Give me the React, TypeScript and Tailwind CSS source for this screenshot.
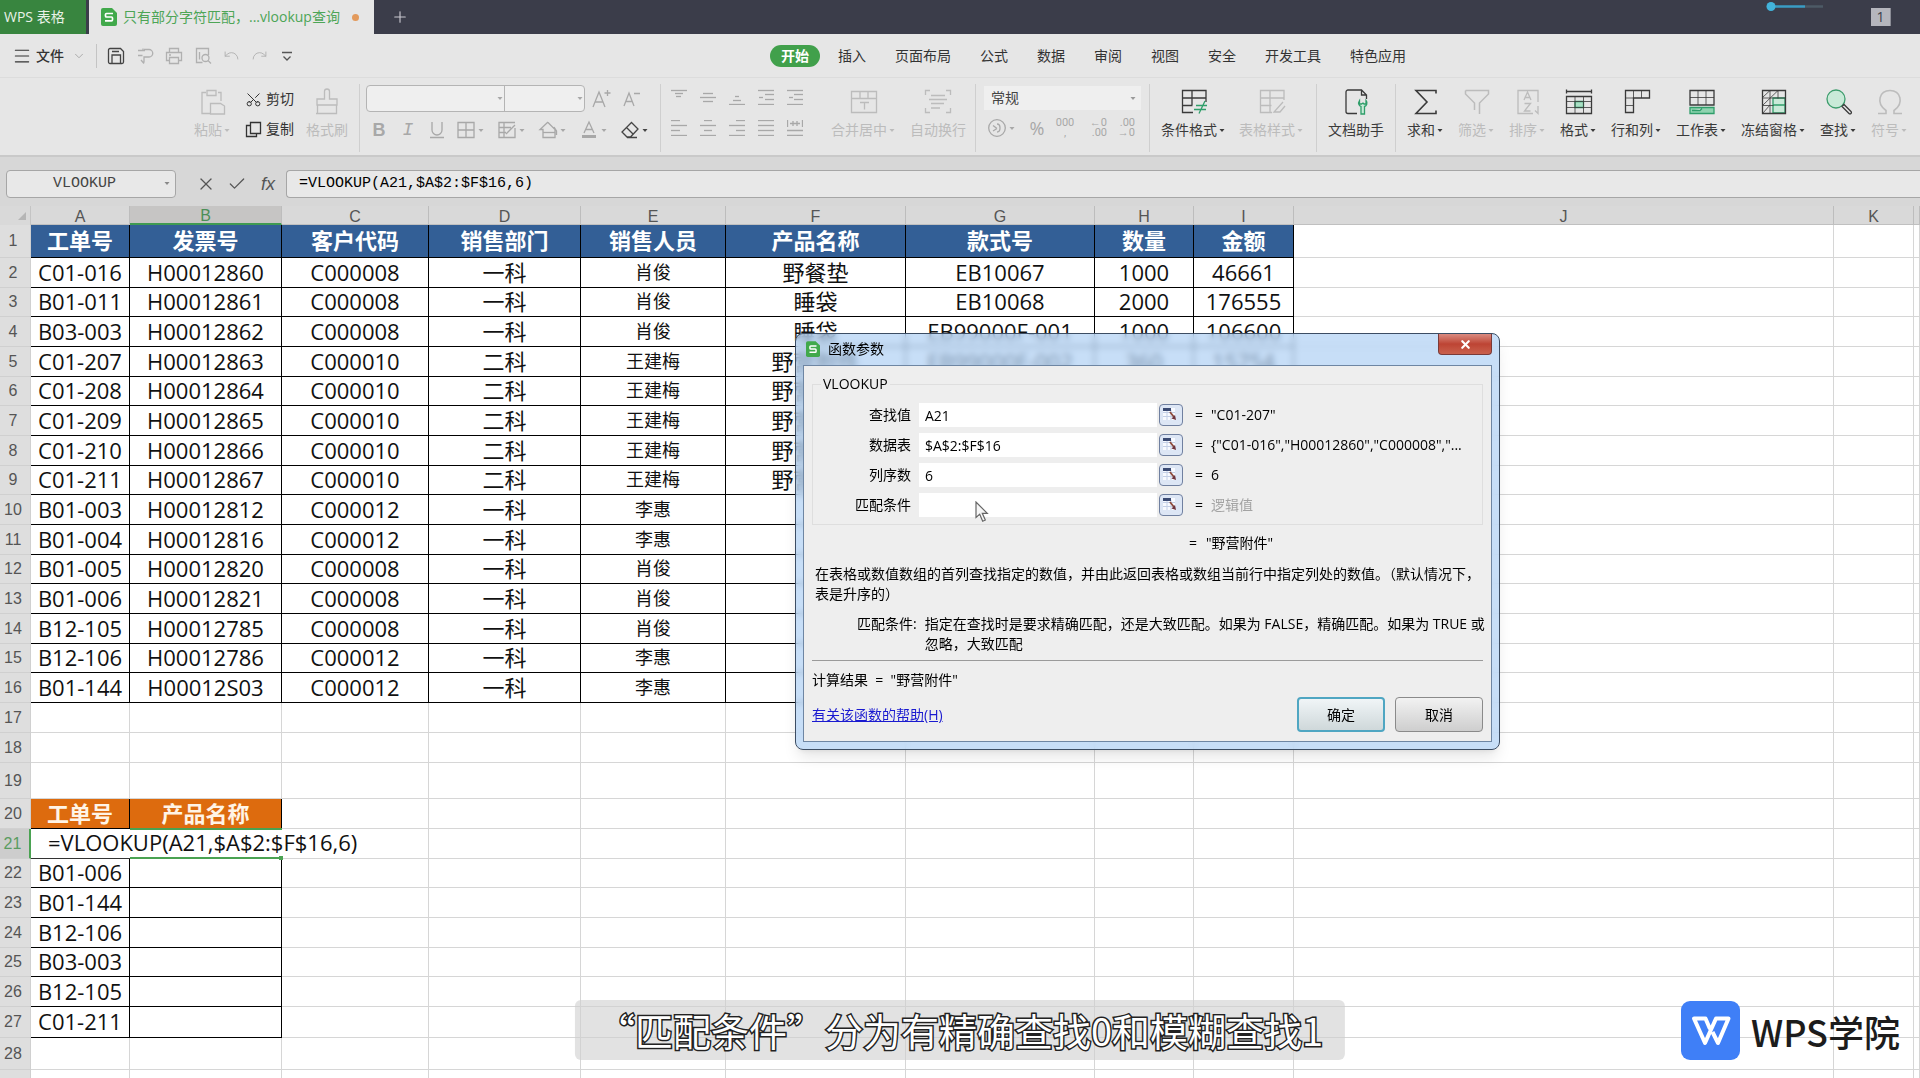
import type { ReactNode } from "react";
import { Menu, ChevronDown, Plus, X, Check, Undo, Redo, Scissors } from "lucide-react";

type Cell = string;

const columns = ["A", "B", "C", "D", "E", "F", "G", "H", "I", "J", "K", ""];

const headers = ["工单号", "发票号", "客户代码", "销售部门", "销售人员", "产品名称", "款式号", "数量", "金额"];

const orders: Cell[][] = [
  ["C01-016", "H00012860", "C000008", "一科", "肖俊", "野餐垫", "EB10067", "1000", "46661"],
  ["B01-011", "H00012861", "C000008", "一科", "肖俊", "睡袋", "EB10068", "2000", "176555"],
  ["B03-003", "H00012862", "C000008", "一科", "肖俊", "睡袋", "EB99000F-001", "1000", "106600"],
  ["C01-207", "H00012863", "C000010", "二科", "王建梅", "野营附件", "EB99000F-002", "360", "15754"],
  ["C01-208", "H00012864", "C000010", "二科", "王建梅", "野营附件", "", "", ""],
  ["C01-209", "H00012865", "C000010", "二科", "王建梅", "野营附件", "", "", ""],
  ["C01-210", "H00012866", "C000010", "二科", "王建梅", "野营附件", "", "", ""],
  ["C01-211", "H00012867", "C000010", "二科", "王建梅", "野营附件", "", "", ""],
  ["B01-003", "H00012812", "C000012", "一科", "李惠", "", "", "", ""],
  ["B01-004", "H00012816", "C000012", "一科", "李惠", "", "", "", ""],
  ["B01-005", "H00012820", "C000008", "一科", "肖俊", "", "", "", ""],
  ["B01-006", "H00012821", "C000008", "一科", "肖俊", "", "", "", ""],
  ["B12-105", "H00012785", "C000008", "一科", "肖俊", "", "", "", ""],
  ["B12-106", "H00012786", "C000012", "一科", "李惠", "", "", "", ""],
  ["B01-144", "H00012S03", "C000012", "一科", "李惠", "", "", "", ""],
];

const lookups = ["B01-006", "B01-144", "B12-106", "B03-003", "B12-105", "C01-211"];

const menuTabs = ["插入", "页面布局", "公式", "数据", "审阅", "视图", "安全", "开发工具", "特色应用"];

const params = [
  { id: "lookup", label: "查找值", value: "A21", result: '"C01-207"' },
  { id: "table", label: "数据表", value: "$A$2:$F$16", result: '{"C01-016","H00012860","C000008","...' },
  { id: "index", label: "列序数", value: "6", result: "6" },
  { id: "match", label: "匹配条件", value: "", result: "逻辑值", dim: true },
];

const FORMULA = "=VLOOKUP(A21,$A$2:$F$16,6)";

function rowHeight(n: number) {
  if (n === 1) return "h-[33px]";
  if (n === 19) return "h-9";
  if (n === 27) return "h-[31px]";
  if (n === 28) return "h-8";
  if (n < 17 && n % 3 === 0) return "h-[29px]";
  if (n === 22 || n === 25) return "h-[29px]";
  return "h-[30px]";
}

function Svg({ children, size = 28, className = "" }: { children: ReactNode; size?: number; className?: string }) {
  return (
    <svg
      width={size}
      height={size}
      viewBox={`0 0 ${size} ${size}`}
      fill="none"
      stroke="currentColor"
      strokeWidth="1.3"
      className={`shrink-0 ${className}`}
      aria-hidden="true"
    >
      {children}
    </svg>
  );
}

function Caret() {
  return (
    <svg width="9" height="5" viewBox="0 0 9 5" className="shrink-0" aria-hidden="true">
      <path d="M2.500 1h5L5 4z" fill="currentColor" />
    </svg>
  );
}

function BigButton({ label, icon, caret = true, disabled = false }: { label: string; icon: ReactNode; caret?: boolean; disabled?: boolean }) {
  return (
    <button
      type="button"
      disabled={disabled}
      className={`flex shrink-0 flex-col items-center gap-1 ${disabled ? "text-[#bcbcbc]" : "text-[#3a3a3a]"}`}
    >
      {icon}
      <span className="flex h-5 items-center whitespace-nowrap">
        {label}
        {caret && <Caret />}
      </span>
    </button>
  );
}

function Divider() {
  return <div className="mt-1.5 h-[68px] w-px shrink-0 bg-[#cfcfcf]" />;
}

function Lines({ rows, label }: { rows: [number, number, number][]; label: string }) {
  return (
    <button type="button" aria-label={label} className="text-[#a8a8a8]">
      <Svg size={16}>
        {rows.map(([x1, x2, y]) => (
          <path key={`${x1}-${y}`} d={`M${x1} ${y}.5H${x2}`} />
        ))}
      </Svg>
    </button>
  );
}

function SheetLogo({ size }: { size: number }) {
  return (
    <svg width={size} height={size + 2} viewBox="0 0 16 18" className="shrink-0" aria-hidden="true">
      <path d="M2 0h9l5 5v11a2 2 0 0 1-2 2H2a2 2 0 0 1-2-2V2a2 2 0 0 1 2-2z" fill="#41a94b" />
      <path d="M12 5.500H5.500a1 1 0 0 0-1 1V8a1 1 0 0 0 1 1h5a1 1 0 0 1 1 1v1.800a1 1 0 0 1-1 1H4" fill="none" stroke="#fff" strokeWidth="1.700" />
    </svg>
  );
}

function TitleBar() {
  return (
    <header className="flex h-[34px] shrink-0 bg-[#3b3d4a]">
      <button type="button" className="w-[86px] shrink-0 bg-[#38853f] pl-1 text-left text-[#e8f2e8]">
        WPS 表格
      </button>
      <div className="ml-[3px] flex w-[285px] shrink-0 items-center bg-[#e6e6e6] pl-3 text-[#4da556]">
        <SheetLogo size={16} />
        <span className="ml-1.5 whitespace-nowrap">只有部分字符匹配，...vlookup查询</span>
        <span className="ml-auto mr-[15px] h-[7px] w-[7px] rounded-full bg-[#e39a5c]" />
      </div>
      <button type="button" aria-label="新建" className="ml-[17px] text-[#c9cad0]">
        <Plus size={18} strokeWidth={1.500} />
      </button>
      <div className="ml-auto flex items-start">
        <svg width="60" height="12" viewBox="0 0 60 12" className="mr-[46px]" aria-hidden="true">
          <path d="M8 6.500H40" stroke="#3a9cc4" strokeWidth="2.500" />
          <path d="M40 6.500H58" stroke="#4d5a66" strokeWidth="2.500" />
          <circle cx="6" cy="6.500" r="4.500" fill="#42b4dc" />
        </svg>
        <span className="mr-[29px] mt-2 flex h-[18px] w-5 items-center justify-center border-r border-[#8b8d96] bg-[#b5b6bd] text-sm text-[#3b3d4a]">
          1
        </span>
      </div>
    </header>
  );
}

function MenuBar() {
  return (
    <nav className="flex h-11 shrink-0 items-center border-b border-[#dcdcdc] text-[#333]">
      <button type="button" className="ml-3 flex shrink-0 items-center gap-1 font-medium">
        <Menu size={20} strokeWidth={1.300} />
        文件
        <ChevronDown size={14} strokeWidth={1.300} className="ml-1 text-[#999]" />
      </button>
      <div className="ml-2.5 h-6 w-px shrink-0 bg-[#c4c4c4]" />
      <div className="ml-2.5 flex shrink-0 items-center gap-[11px] text-[#b0b0b0]">
        <button type="button" aria-label="保存" className="text-[#444]">
          <Svg size={18}>
            <path d="M3 1.500h10.500l3 3V15a1.500 1.500 0 0 1-1.500 1.500H3A1.500 1.500 0 0 1 1.500 15V3A1.500 1.500 0 0 1 3 1.500zM5 16.500V8h8.500v8.500M5 4.500h7" />
          </Svg>
        </button>
        <button type="button" aria-label="输出">
          <Svg size={18}>
            <path d="M2 3.500h7M2 8.500h4.500M7 3.500V1.500M8 2.500h5a3.500 3.500 0 0 1 0 7.500H8v5.500M5 13l3 3.500" />
          </Svg>
        </button>
        <button type="button" aria-label="打印">
          <Svg size={18}>
            <path d="M4.500 5V1.500h9V5M4.500 13.500h-3V5.500h15v8h-3M4.500 10.500h9v6h-9zM4 8h2" />
          </Svg>
        </button>
        <button type="button" aria-label="打印预览">
          <Svg size={18}>
            <path d="M14.500 8V1.500h-12v14h6M5.500 5v7.500" />
            <circle cx="11.500" cy="11" r="3.500" />
            <path d="M14 13.500l3 3" />
          </Svg>
        </button>
        <button type="button" aria-label="撤销">
          <Undo size={17} strokeWidth={1.300} />
        </button>
        <button type="button" aria-label="恢复">
          <Redo size={17} strokeWidth={1.300} />
        </button>
        <button type="button" aria-label="更多" className="text-[#555]">
          <Svg size={16}>
            <path d="M3 4.500h10M4.500 8.500L8 12l3.500-3.500" />
          </Svg>
        </button>
      </div>
      <div className="ml-[475px] flex items-center gap-[29px] whitespace-nowrap">
        <button type="button" className="-mr-[11px] h-[22px] rounded-full bg-[#41a04b] px-[11px] font-bold text-white">
          开始
        </button>
        {menuTabs.map((t) => (
          <button key={t} type="button">
            {t}
          </button>
        ))}
      </div>
    </nav>
  );
}

function IconCaret({ children, label, dark = false }: { children: ReactNode; label: string; dark?: boolean }) {
  return (
    <button type="button" aria-label={label} className={`flex w-8 items-center ${dark ? "text-[#444]" : "text-[#a8a8a8]"}`}>
      {children}
      <Caret />
    </button>
  );
}

function Ribbon() {
  return (
    <div className="flex h-[79px] shrink-0 items-start border-b-2 border-[#c9c9c9] pl-[194px]">
      {/* clipboard */}
      <div className="flex pr-[11px] pt-2.5">
        <BigButton
          label="粘贴"
          disabled
          icon={
            <Svg>
              <path d="M7 4.500H3v21h8M19 4.500h3V13M8 2.500h9v5H8z" />
              <path d="M11.500 15.500h10l4 2.500v8h-14z" />
            </Svg>
          }
        />
        <div className="-mt-px ml-3.5 flex flex-col gap-1.5 text-[#333]">
          <button type="button" className="flex h-6 items-center gap-1">
            <Scissors size={17} strokeWidth={1.400} className="-rotate-90" />
            剪切
          </button>
          <button type="button" className="flex h-6 items-center gap-1">
            <Svg size={17}>
              <path d="M5.500 1.500h10v11h-10zM5.500 4.500h-4v11h10v-3" />
            </Svg>
            复制
          </button>
        </div>
        <div className="ml-3 flex">
          <BigButton
            label="格式刷"
            caret={false}
            disabled
            icon={
              <Svg>
                <path d="M11.500 11V3.500a2.500 2.500 0 0 1 5 0V11H24v6H4v-6zM4.500 17v8.500h19V17M3 25.500h3" />
              </Svg>
            }
          />
        </div>
      </div>
      <Divider />

      {/* font */}
      <div className="flex flex-col gap-1.5 pl-1.5 pr-2 pt-[7px]">
        <div className="flex items-center text-[#a8a8a8]">
          <div className="flex h-[27px] w-[219px] rounded border border-[#b4b4b4] bg-[#efefef]">
            <label className="flex w-[138px] items-center border-r border-[#b4b4b4]">
              <select aria-label="字体" className="w-full appearance-none outline-none" />
              <Caret />
            </label>
            <label className="flex flex-1 items-center">
              <select aria-label="字号" className="w-full appearance-none outline-none" />
              <Caret />
            </label>
          </div>
          <button type="button" aria-label="增大字号" className="ml-1.5">
            <Svg size={20}>
              <path d="M2 18L8 3l6 15M4 13h8M16.500 1v6M13.500 4h6" />
            </Svg>
          </button>
          <button type="button" aria-label="减小字号" className="ml-2.5">
            <Svg size={20}>
              <path d="M3 17L8 4l5 13M5 12.500h6M13 4.500h6" />
            </Svg>
          </button>
        </div>
        <div className="flex h-6 items-center gap-[9px] pl-[3px] text-base text-[#a8a8a8]">
          <button type="button" className="w-5 font-['Liberation_Sans'] text-lg font-bold">B</button>
          <button type="button" className="w-5 font-['Liberation_Mono'] text-lg italic">I</button>
          <button type="button" aria-label="下划线" className="w-5">
            <Svg size={20}>
              <path d="M5 2v8a5 5 0 0 0 10 0V2M3 17.500h14" />
            </Svg>
          </button>
          <IconCaret label="边框">
            <Svg size={20}>
              <path d="M2 2.500h16v15H2zM10 2.500v15M2 10h16" />
            </Svg>
          </IconCaret>
          <IconCaret label="绘图边框">
            <Svg size={20}>
              <path d="M18 8v9.500H2v-15h16M2 7.500h12M2 12.500h7M7 2.500v15M9 14l9-9" />
            </Svg>
          </IconCaret>
          <IconCaret label="填充颜色">
            <Svg size={20}>
              <path d="M10 2L2 9.500h3v8h12v-8l-7-7M16 7l2.500 4v4" />
              <path d="M5 12.500h12" />
            </Svg>
          </IconCaret>
          <IconCaret label="字体颜色">
            <Svg size={20}>
              <path d="M5 13l5-11 5 11M7 9.500h6" />
              <path d="M3 16.500h14" strokeWidth="3" />
            </Svg>
          </IconCaret>
          <IconCaret label="清除" dark>
            <Svg size={20}>
              <path d="M11.500 2.500L18 9l-7.500 8H7l-5-5zM6.500 7.500L13 14M7 17.500h10" />
            </Svg>
          </IconCaret>
        </div>
      </div>
      <Divider />

      {/* alignment */}
      <div className="flex pl-2.5 pr-[9px]">
        <div className="flex flex-col gap-[15px] pt-[11px]">
          <div className="flex gap-[13px]">
            <Lines label="顶端对齐" rows={[[0, 16, 1], [4, 12, 4], [5, 10, 7]]} />
            <Lines label="垂直居中" rows={[[3, 13, 4], [0, 16, 8], [3, 13, 12]]} />
            <Lines label="底端对齐" rows={[[6, 10, 7], [4, 12, 11], [0, 16, 15]]} />
            <Lines label="减少缩进" rows={[[0, 16, 1], [7, 16, 5], [1, 5, 8], [7, 16, 10], [0, 16, 15]]} />
            <Lines label="增加缩进" rows={[[0, 16, 1], [7, 16, 5], [2, 6, 8], [7, 16, 10], [0, 16, 15]]} />
          </div>
          <div className="flex gap-[13px]">
            <Lines label="左对齐" rows={[[0, 16, 5], [0, 9, 0], [0, 9, 10], [0, 16, 15]]} />
            <Lines label="居中" rows={[[4, 12, 0], [0, 16, 5], [4, 12, 10], [0, 16, 15]]} />
            <Lines label="右对齐" rows={[[7, 16, 0], [0, 16, 5], [7, 16, 10], [0, 16, 15]]} />
            <Lines label="两端对齐" rows={[[0, 16, 0], [0, 16, 5], [0, 16, 10], [0, 16, 15]]} />
            <button type="button" aria-label="分散对齐" className="text-[#a8a8a8]">
              <Svg size={16}>
                <path d="M.5 0v7M15.500 0v7M3 3.500h10M6 1v5M10 1v5M0 10.500h16M0 15.500h16" />
              </Svg>
            </button>
          </div>
        </div>
        <div className="ml-7 flex gap-3.5 pt-2.5">
          <BigButton
            label="合并居中"
            disabled
            icon={
              <Svg>
                <path d="M1.500 3.500h25v21h-25zM1.500 10.500h25M10 3.500v7M18 3.500v7M10 14.500h9M14.500 14.500v7" />
              </Svg>
            }
          />
          <BigButton
            label="自动换行"
            caret={false}
            disabled
            icon={
              <Svg>
                <path d="M1.500 7V2.500H6M22 2.500h4.500V7M1.500 20v4.500H6M22 24.500h4.500V20M7 7.500h14M5 11.500h18M7 15.500h13M7 20h9" />
              </Svg>
            }
          />
        </div>
      </div>
      <Divider />

      {/* number format */}
      <div className="flex flex-col gap-1.5 px-2 pt-2">
        <label className="flex h-6 w-[157px] items-center bg-[#efefef] pl-[7px] pr-1 text-[#999]">
          <select aria-label="数字格式" className="w-full appearance-none text-[#444] outline-none">
            <option>常规</option>
          </select>
          <Caret />
        </label>
        <div className="flex h-6 items-center pl-[3px] text-[#a8a8a8]">
          <IconCaret label="会计格式">
            <Svg size={20}>
              <circle cx="10" cy="10" r="8.300" />
              <path d="M6 7.500l4 3M6 13l4-2.500M10 6c4 0 4 8 0 8" />
            </Svg>
          </IconCaret>
          <button type="button" className="ml-2 w-5 text-lg">%</button>
          <button type="button" aria-label="千位分隔" className="ml-2 flex w-5 flex-col items-center font-['Roboto'] text-[11px] leading-[10px]">
            <span>000</span>
            <span>,</span>
          </button>
          <button type="button" aria-label="增加小数位" className="ml-3 flex w-5 flex-col items-end font-['Roboto'] text-[11px] leading-[10px]">
            <span>←0</span>
            <span>.00</span>
          </button>
          <button type="button" aria-label="减少小数位" className="ml-2 flex w-5 flex-col items-end font-['Roboto'] text-[11px] leading-[10px]">
            <span>.00</span>
            <span>→0</span>
          </button>
        </div>
      </div>
      <Divider />

      {/* styles */}
      <div className="flex gap-[13px] pl-[11px] pr-3 pt-2.5">
        <BigButton
          label="条件格式"
          icon={
            <Svg>
              <path d="M26 14V2.500H2.500v22H13M2.500 10h23.500M2.500 17.500h10M12 2.500V17" />
              <path d="M16 17.500h11M14 21.500h12M25 13l-6 12.500" stroke="#2f9e6a" />
            </Svg>
          }
        />
        <BigButton
          label="表格样式"
          disabled
          icon={
            <Svg>
              <path d="M26 12V2.500H2.500v22H14M2.500 10h23.500M2.500 17.500h11M12 2.500V24M25 14l-9 10h6l5-6" />
            </Svg>
          }
        />
      </div>
      <Divider />
      <div className="px-[11px] pt-2.5">
        <BigButton
          label="文档助手"
          caret={false}
          icon={
            <Svg>
              <path d="M15 25.500H6a2 2 0 0 1-2-2V4a2 2 0 0 1 2-2h13.500l5 5v4M19.500 2v5h5" />
              <path d="M17.500 12.500c-2 3 0 5.500 1.500 6v7.500h3.500v-7.500c2-.5 3.500-3.500 1.500-6v3.500h-2l-1-1-1.500 1h-2z" fill="#c9ead8" stroke="#2f9e6a" />
            </Svg>
          }
        />
      </div>
      <Divider />

      {/* editing */}
      <div className="flex gap-3.5 pl-[11px] pt-2.5">
        <BigButton
          label="求和"
          icon={
            <Svg>
              <path d="M24 5.500V2.500H4l11 11.500L4 25.500h20v-3" strokeWidth="1.600" />
            </Svg>
          }
        />
        <BigButton
          label="筛选"
          disabled
          icon={
            <Svg>
              <path d="M2.500 2.500h23v3.500L16.500 15v11M2.500 2.500V6l9 9v7" strokeWidth="1.500" />
            </Svg>
          }
        />
        <BigButton
          label="排序"
          disabled
          icon={
            <Svg>
              <path d="M24 14V2.500H4v23h15M24 18v7.500l-3-3M10 12l3.500-8 3.500 8M11.500 9.500h4M10.500 15.500h6l-6 7.500h6" />
            </Svg>
          }
        />
        <BigButton
          label="格式"
          icon={
            <Svg>
              <path d="M10 13.500h8.500v6H10z" fill="#a9e0c4" stroke="#2f9e6a" />
              <path d="M1.500 3.500h25M1.500 1.500v4M26.500 1.500v4M1.500 8.500h25v17h-25z" />
              <path d="M1.500 13.500h25M1.500 19.500h25M10 8.500v17M18.500 8.500v17" strokeWidth="0.800" />
            </Svg>
          }
        />
        <BigButton
          label="行和列"
          icon={
            <Svg>
              <path d="M2.500 2.500h24v7.500h-16v14.500h-8z" />
              <path d="M10.500 2.500V10M18.500 2.500V10M2.500 10h8M2.500 17.500h8" strokeWidth="0.800" />
            </Svg>
          }
        />
        <BigButton
          label="工作表"
          icon={
            <Svg>
              <path d="M2 2.500h24v14.500H2z" />
              <path d="M2 9.500h24M10 2.500v14.500M18 2.500v14.500" strokeWidth="0.800" />
              <path d="M2 19.500h24v6H2zM4 22.500h8l2-2" fill="#8fd3b0" stroke="#2f9e6a" />
            </Svg>
          }
        />
        <BigButton
          label="冻结窗格"
          icon={
            <Svg>
              <path d="M13 10h12v7H13zM13 17h12v8H13z" fill="#c9ead8" stroke="#2f9e6a" />
              <path d="M2.500 2.500h23v23h-23z" />
              <path d="M2.500 10h23M2.500 17.500h11M10 2.500v23M18 2.500v8M3 9l7-6.500M3 17l15-14.500M3 25l7-8" strokeWidth="0.800" />
            </Svg>
          }
        />
        <BigButton
          label="查找"
          icon={
            <Svg>
              <circle cx="11" cy="11" r="9" fill="#c9ead8" stroke="#3d9d6d" />
              <path d="M17 18.500l2-2 7 7a1.400 1.400 0 0 1-2 2z" />
            </Svg>
          }
        />
        <BigButton
          label="符号"
          disabled
          icon={
            <Svg>
              <path d="M2 25.500h8v-3C-.5 15 3.500 2.500 14 2.500S28.500 15 18 22.500v3h8" strokeWidth="1.600" />
            </Svg>
          }
        />
      </div>
    </div>
  );
}

function FormulaBar() {
  return (
    <div className="flex h-[49px] shrink-0 items-center bg-[#d7d7d7] pl-1.5 pt-1 font-['Liberation_Mono',monospace] text-[15px]">
      <div className="flex h-7 w-[170px] shrink-0 items-center rounded border border-[#a6a6a6] bg-[#e8e8e8] pr-1 text-[#888]">
        <input aria-label="名称框" defaultValue="VLOOKUP" className="w-full min-w-0 bg-transparent text-center text-[#444] outline-none" />
        <Caret />
      </div>
      <div className="ml-5 flex shrink-0 items-center gap-[11px] text-[#555]">
        <button type="button" aria-label="取消输入">
          <X size={20} strokeWidth={1.500} />
        </button>
        <button type="button" aria-label="确认输入">
          <Check size={20} strokeWidth={1.500} />
        </button>
        <button type="button" aria-label="插入函数" className="w-5 font-['Liberation_Sans'] text-lg italic">
          fx
        </button>
      </div>
      <input
        aria-label="编辑栏"
        defaultValue={FORMULA}
        className="ml-2 h-7 min-w-0 flex-1 rounded-l border border-r-0 border-[#a6a6a6] bg-[#e8e8e8] pl-3 text-black outline-none"
      />
    </div>
  );
}

const dataCell = "border-b border-r border-black pb-0.5";
const gridCell = "border-b border-r border-[#d6d6d6]";

function RowHead({ n }: { n: number | null }) {
  return (
    <th
      className={`border-b border-r border-[#d0d0d0] pr-1 text-center font-['Liberation_Sans'] text-base font-normal leading-5 ${
        n === 21 ? "border-r-2 border-r-[#4aa252] bg-[#cdcdcd] text-[#5a9c60]" : "bg-[#dedede] text-[#555]"
      }`}
    >
      {n}
    </th>
  );
}

function Blank({ count }: { count: number }) {
  return (
    <>
      {Array.from({ length: count }, (_, i) => (
        <td key={i} className={gridCell} />
      ))}
    </>
  );
}

function Sheet() {
  return (
    <table className="w-full table-fixed border-separate border-spacing-0 bg-white text-center text-[22px] leading-6 text-[#111]">
      <colgroup>
        <col className="w-[31px]" />
        <col className="w-[99px]" />
        <col className="w-[152px]" />
        <col className="w-[147px]" />
        <col className="w-[152px]" />
        <col className="w-[145px]" />
        <col className="w-[180px]" />
        <col className="w-[189px]" />
        <col className="w-[99px]" />
        <col className="w-[100px]" />
        <col className="w-[540px]" />
        <col className="w-20" />
        <col />
      </colgroup>
      <thead>
        <tr className="h-[19px] bg-[#d9d9d9] font-['Liberation_Sans'] text-base leading-[14px] text-[#555]">
          <td className="border-r border-[#c4c4c4]">
            <svg width="8" height="8" viewBox="0 0 8 8" className="ml-auto mr-1" aria-hidden="true">
              <path d="M8 0v8H0z" fill="#b5b5b5" />
            </svg>
          </td>
          {columns.map((c, i) => (
            <th
              key={i}
              className={`border-b border-r border-r-[#bdbdbd] pt-[3px] font-normal ${
                c === "B" ? "border-b-2 border-b-[#3f9a52] bg-[#c6c5c4] text-[#4c8f58]" : "border-b-[#c0c0c0]"
              }`}
            >
              {c}
            </th>
          ))}
        </tr>
      </thead>
      <tbody>
        <tr className={rowHeight(1)}>
          <RowHead n={1} />
          {headers.map((h) => (
            <th key={h} className="border-b border-r border-black bg-[#335f96] pb-0.5 font-bold text-white">
              {h}
            </th>
          ))}
          <Blank count={3} />
        </tr>
        {orders.map((row, r) => (
          <tr key={row[0]} className={rowHeight(r + 2)}>
            <RowHead n={r + 2} />
            {row.map((v, c) => (
              <td key={c} className={c === 4 ? `${dataCell} text-lg leading-6` : dataCell}>
                {v}
              </td>
            ))}
            <Blank count={3} />
          </tr>
        ))}
        {[17, 18, 19].map((n) => (
          <tr key={n} className={rowHeight(n)}>
            <RowHead n={n} />
            <Blank count={12} />
          </tr>
        ))}
        <tr className={rowHeight(20)}>
          <RowHead n={20} />
          <th className="border-b border-r border-black bg-[#dd6b0e] pb-0.5 font-bold text-[#fff4e6]">工单号</th>
          <th className="border-b border-r border-black bg-[#dd6b0e] pb-0.5 font-bold text-[#fff4e6]">产品名称</th>
          <Blank count={10} />
        </tr>
        <tr className={rowHeight(21)}>
          <RowHead n={21} />
          {/* the formula being typed spills over the neighbours */}
          <td colSpan={3} className="relative border-b border-r border-[#d6d6d6] pb-1 pl-[17px] text-left">
            {FORMULA}
            <span className="absolute -bottom-px left-0 h-px w-[99px] bg-[#333]" />
            <span className="absolute -top-px left-[99px] h-0.5 w-[152px] bg-[#4aa252]" />
            <span className="absolute -bottom-px left-[99px] h-0.5 w-[152px] bg-[#4aa252]" />
            <span className="absolute -bottom-0.5 left-[248px] h-1 w-1 bg-[#4aa252]" />
          </td>
          <Blank count={9} />
        </tr>
        {lookups.map((v, i) => (
          <tr key={v} className={rowHeight(i + 22)}>
            <RowHead n={i + 22} />
            <td className={dataCell}>{v}</td>
            <td className={dataCell} />
            <Blank count={10} />
          </tr>
        ))}
        <tr className={rowHeight(28)}>
          <RowHead n={28} />
          <Blank count={12} />
        </tr>
        <tr className={rowHeight(29)}>
          <RowHead n={null} />
          <Blank count={12} />
        </tr>
      </tbody>
    </table>
  );
}

function FunctionDialog() {
  return (
    <div
      role="dialog"
      aria-label="函数参数"
      className="absolute left-[795px] top-[333px] w-[705px] rounded-lg border border-[#3c4d63] bg-[#a9cdf2]/65 px-[7px] pb-[7px] text-black shadow-lg backdrop-blur-[3px]"
    >
      <div className="flex h-[31px] items-start">
        <div className="ml-[3px] flex h-[30px] items-center gap-2">
          <SheetLogo size={14} />
          函数参数
        </div>
        <button
          type="button"
          aria-label="关闭"
          className="ml-auto flex h-[21px] w-[54px] items-center justify-center rounded-b border border-t-0 border-[#7a3a38] bg-gradient-to-b from-[#d98a80] via-[#bd4434] to-[#c9604c] text-white"
        >
          <X size={13} strokeWidth={4} />
        </button>
      </div>

      <div className="border border-[#6e86a3] bg-[#eeeeee] px-2 pb-[9px] pt-2">
        <fieldset className="border border-[#dedede] pb-[7px]">
          <legend className="ml-2 px-0.5 leading-5">VLOOKUP</legend>
          <div className="flex flex-col gap-1.5 pt-[9px]">
            {params.map((p) => (
              <div key={p.id} className="flex h-6 items-center">
                <label htmlFor={p.id} className="w-[98px] shrink-0 text-right">
                  {p.label}
                </label>
                <input id={p.id} defaultValue={p.value} className="ml-2 h-6 w-[238px] shrink-0 bg-white pl-1.5 outline-none" />
                <button
                  type="button"
                  aria-label={`选择${p.label}`}
                  className="ml-0.5 flex h-[22px] w-6 shrink-0 items-center justify-center rounded-sm border border-[#7080a0] bg-[#dde6f5]"
                >
                  <svg width="18" height="16" viewBox="0 0 18 16" aria-hidden="true">
                    <path d="M1 1h12v12H1z" fill="#f8faff" />
                    <path d="M1 5.500h12M1 9.500h12M5 3v10M9 3v10" stroke="#c3cfe6" fill="none" />
                    <path d="M1 1h8v3H1z" fill="#3b4a72" />
                    <path d="M8 5l4 5" stroke="#8c4a3c" strokeWidth="1.800" />
                    <path d="M14 13l-4.500-1.500 3.500-3.500z" fill="#6d3540" />
                  </svg>
                </button>
                <span className="ml-3 w-4 shrink-0">=</span>
                <span className={p.dim ? "text-[#a3a3a3]" : ""}>{p.result}</span>
              </div>
            ))}
          </div>
        </fieldset>
        <p className="mt-2 flex pl-[377px] leading-5">
          <span className="w-[17px]">=</span>"野营附件"
        </p>
        <p className="mt-[11px] whitespace-nowrap pl-[3px] leading-5">
          在表格或数值数组的首列查找指定的数值，并由此返回表格或数组当前行中指定列处的数值。（默认情况下，
          <br />
          表是升序的）
        </p>
        <div className="mt-2.5 flex gap-2 whitespace-nowrap pl-[45px] leading-5">
          <span>匹配条件:</span>
          <p>
            指定在查找时是要求精确匹配，还是大致匹配。如果为 FALSE，精确匹配。如果为 TRUE 或
            <br />
            忽略，大致匹配
          </p>
        </div>
        <hr className="mt-1.5 border-[#9a9a9a]" />
        <p className="mt-[9px] leading-5">计算结果&nbsp; =&nbsp; "野营附件"</p>
        <div className="mt-[7px] flex items-center gap-2.5">
          <a href="#help" className="mr-auto text-[#1a1ad0] underline">
            有关该函数的帮助(H)
          </a>
          <button
            type="button"
            className="h-[35px] w-[88px] rounded border-2 border-[#4fa6c2] bg-gradient-to-b from-[#f0f5f7] to-[#cfd8da]"
          >
            确定
          </button>
          <button type="button" className="h-[35px] w-[88px] rounded border border-[#8a8a8a] bg-gradient-to-b from-[#f2f2f2] to-[#cecece]">
            取消
          </button>
        </div>
      </div>
    </div>
  );
}

export default function App() {
  return (
    <div
      lang="zh-CN"
      className="relative flex h-screen flex-col overflow-hidden bg-[#e6e6e6] font-['Open_Sans','Noto_Sans_CJK_SC',sans-serif] text-sm"
    >
      <TitleBar />
      <MenuBar />
      <Ribbon />
      <FormulaBar />
      <Sheet />
      <FunctionDialog />

      {/* mouse pointer */}
      <svg width="14" height="22" viewBox="0 0 14 22" className="absolute left-[975px] top-[501px]" aria-hidden="true">
        <path d="M1 1v15.500l3.700-3.300 3 7 2.600-1.200-3-6.700h5z" fill="#f6f6f6" stroke="#666" strokeWidth="1.200" />
      </svg>

      {/* subtitle */}
      <div className="absolute bottom-[18px] left-1/2 -translate-x-1/2 whitespace-nowrap rounded-md bg-[#cfcfcf]/60 px-[22px] font-['Noto_Sans_CJK_SC',sans-serif] text-[38px] leading-[60px] text-white [paint-order:stroke] [-webkit-text-stroke:3px_#222]">
        “匹配条件”分为有精确查找0和模糊查找1
      </div>

      {/* watermark */}
      <div className="absolute bottom-[18px] right-5 flex items-center gap-[11px] font-['Noto_Sans_CJK_SC',sans-serif] text-4xl font-medium text-[#1c1c1c]">
        <svg width="59" height="59" viewBox="0 0 59 59" aria-hidden="true">
          <rect width="59" height="59" rx="9" fill="#3f7ff7" />
          <path d="M29 28L24.500 17.500H13L24 42L35 17.500H47.500L37 42L31.500 31" fill="none" stroke="#fff" strokeWidth="4" strokeLinejoin="round" />
        </svg>
        WPS学院
      </div>
    </div>
  );
}
